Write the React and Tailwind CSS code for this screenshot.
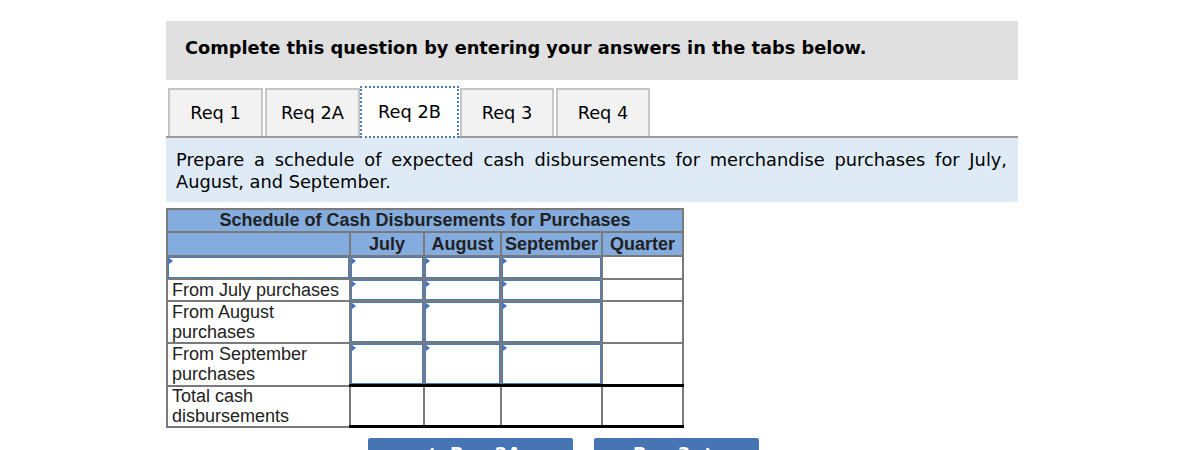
import React from "react";
import { ChevronLeft, ChevronRight } from "lucide-react";

const verdana = { fontFamily: '"DejaVu Sans", Verdana, sans-serif' };

const tabs = [
  { label: "Req 1", w: "w-[95px]" },
  { label: "Req 2A", w: "w-[95px]" },
  { label: "Req 2B", w: "w-[99px]", active: true },
  { label: "Req 3", w: "w-[94px]" },
  { label: "Req 4", w: "w-[94px]" },
];

const rows = [
  { label: null, h: "h-[21px]" },
  { label: "From July purchases", h: "h-[20px]" },
  { label: "From August purchases", h: "h-[40px]" },
  { label: "From September purchases", h: "h-[40px]" },
];

const InputBox = () => (
  <div className="relative h-full w-full border border-[#4a7cbf] bg-white">
    <span className="absolute left-0 top-0 h-0 w-0 border-y-[3px] border-l-[4px] border-y-transparent border-l-[#3d72c4]" />
  </div>
);

const App = () => {
  return (
    <div className="h-[450px] w-[1186px] overflow-hidden bg-white">
      <div className="ml-[166px] w-[852px] pt-[21px]">
        {/* Instruction header */}
        <div
          className="flex h-[59px] items-center bg-[#e0e0e0] pb-[5px] pl-[19px] text-[17.8px] font-bold text-black"
          style={verdana}
        >
          Complete this question by entering your answers in the tabs below.
        </div>

        {/* Tabs */}
        <div className="mt-[6px] flex items-end border-b-2 border-[#9a9a9a] pl-[2px]" style={verdana}>
          {tabs.map((t, i) =>
            t.active ? (
              <div
                key={t.label}
                className={`${t.w} -mb-[2px] flex h-[52px] items-center justify-center border-2 border-dotted border-[#4a7cbf] bg-white text-[17.8px] text-black`}
              >
                {t.label}
              </div>
            ) : (
              <div
                key={t.label}
                className={`${t.w} ${i === 0 ? "mr-[2px]" : ""} ${i === 3 ? "ml-[1px] mr-[2px]" : ""} flex h-[48px] items-center justify-center border-2 border-b-0 border-[#c6c6c6] bg-[#f2f2f2] pt-[1px] text-[17.8px] text-black`}
              >
                {t.label}
              </div>
            )
          )}
        </div>

        {/* Question text */}
        <div className="bg-[#deebf7] pb-[9px] pl-[10px] pr-[11px] pt-[11px]">
          <p className="text-justify text-[17.8px] leading-[22px] text-black" style={verdana}>
            Prepare a schedule of expected cash disbursements for merchandise purchases for July,
            August, and September.
          </p>
        </div>

        {/* Schedule table */}
        <table
          className="mt-[6px] w-[516px] table-fixed border-collapse border-2 border-[#7a7a7a] text-[18px] text-[#222]"
          style={{ fontFamily: '"Liberation Sans", Arial, sans-serif' }}
        >
          <colgroup>
            <col className="w-[183px]" />
            <col className="w-[74px]" />
            <col className="w-[77px]" />
            <col className="w-[101px]" />
            <col className="w-[81px]" />
          </colgroup>
          <thead>
            <tr className="bg-[#84acdf]">
              <th colSpan={5} className="h-[21px] border-2 border-[#7a7a7a] p-0 text-center font-bold leading-[21px]">
                Schedule of Cash Disbursements for Purchases
              </th>
            </tr>
            <tr className="bg-[#84acdf]">
              <th className="h-[22px] border-2 border-[#7a7a7a] p-0" />
              {["July", "August", "September", "Quarter"].map((m) => (
                <th key={m} className="h-[22px] border-2 border-[#7a7a7a] p-0 text-center font-bold leading-[22px]">
                  {m}
                </th>
              ))}
            </tr>
          </thead>
          <tbody>
            {rows.map((r, i) => (
              <tr key={i}>
                <td className="border-2 border-[#7a7a7a] p-0 align-middle">
                  {r.label ? (
                    <div className={`${r.h} flex items-center px-[4px] leading-[20px]`}>{r.label}</div>
                  ) : (
                    <div className={r.h}>
                      <InputBox />
                    </div>
                  )}
                </td>
                {[0, 1, 2].map((c) => (
                  <td key={c} className="border-2 border-[#7a7a7a] p-0">
                    <div className={r.h}>
                      <InputBox />
                    </div>
                  </td>
                ))}
                <td className="border-2 border-[#7a7a7a] p-0" />
              </tr>
            ))}
            <tr>
              <td className="border-2 border-[#7a7a7a] p-0">
                <div className="flex h-[39px] items-center px-[4px] leading-[20px]">Total cash disbursements</div>
              </td>
              {[0, 1, 2, 3].map((c) => (
                <td
                  key={c}
                  className="border-2 border-x-[#7a7a7a] border-b-[3px] border-t-[3px] border-b-black border-t-black border-b-double p-0"
                />
              ))}
            </tr>
          </tbody>
        </table>

        {/* Navigation buttons */}
        <div className="ml-[202px] mt-[10px] flex gap-[21px] text-white" style={verdana}>
          <button className="flex h-[40px] w-[205px] items-start justify-center gap-[10px] rounded-t-[2px] bg-[#4775b3] pt-[5px] text-[17.8px] font-bold leading-[22px]">
            <ChevronLeft className="mt-[1px] h-5 w-5" strokeWidth={3} />
            Req 2A
          </button>
          <button className="flex h-[40px] w-[165px] items-start justify-center gap-[10px] rounded-t-[2px] bg-[#4775b3] pt-[5px] text-[17.8px] font-bold leading-[22px]">
            Req 3
            <ChevronRight className="mt-[1px] h-5 w-5" strokeWidth={3} />
          </button>
        </div>
      </div>
    </div>
  );
};

export default App;
